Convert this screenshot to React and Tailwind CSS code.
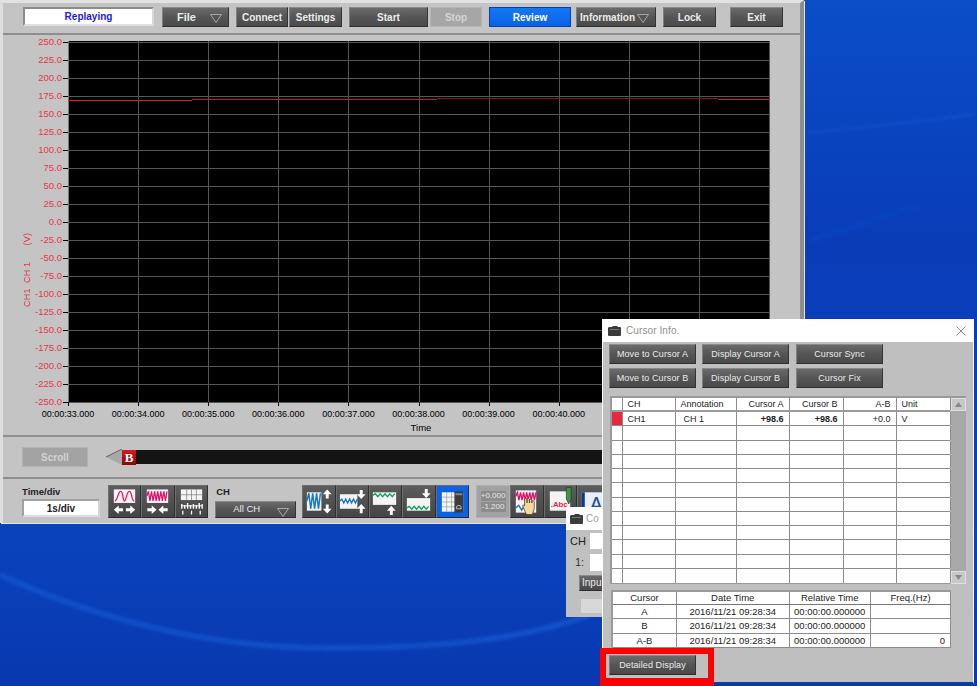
import React from "react";

const font = "font-['Liberation_Sans',Arial,sans-serif]";

const yTicks = [
  "250.0", "225.0", "200.0", "175.0", "150.0", "125.0", "100.0", "75.0", "50.0", "25.0", "0.0",
  "-25.0", "-50.0", "-75.0", "-100.0", "-125.0", "-150.0", "-175.0", "-200.0", "-225.0", "-250.0",
];
const times = ["33", "34", "35", "36", "37", "38", "39", "40", "41", "42", "43"];
// the last three labels sit under the Cursor Info window
const visibleTimes = times.slice(0, 8);

const bevel =
  "border border-t-[#8a8a8a] border-l-[#808080] border-r-[#333333] border-b-[#2e2e2e] bg-linear-to-b from-[#6b6b6b] via-[#555555] to-[#4a4a4a]";

// dark beveled button used all over the app
const Btn = ({ children, className = "", caret = false }) => (
  <div className={`flex items-center justify-center text-[#ececec] ${bevel} ${className}`}>
    <span>{children}</span>
    {caret && (
      <svg width="12" height="9" viewBox="0 0 12 9" className="absolute right-[6px] top-[6px]">
        <path d="M0.5 0.5H11.5L6 8.5Z" fill="none" stroke="#a8a8a8" />
      </svg>
    )}
  </div>
);

const Arrow = ({ x, y, dir }) => {
  const rot = { up: 0, right: 90, down: 180, left: 270 }[dir];
  return (
    <path
      transform={`translate(${x} ${y}) rotate(${rot})`}
      d="M0 -5L4.5 0H1.5V4.5H-1.5V0H-4.5Z"
      fill="#fff"
    />
  );
};

const Panel = ({ x, y, w, h }) => {
  const v = [];
  for (let i = x + 4; i < x + w; i += 4) v.push(i);
  const hz = [];
  for (let i = y + 4; i < y + h; i += 4) hz.push(i);
  return (
    <g>
      <rect x={x} y={y} width={w} height={h} fill="#f4f4f4" />
      {v.map((i) => (
        <line key={i} x1={i} x2={i} y1={y} y2={y + h} stroke="#b5b5b5" strokeWidth="0.5" />
      ))}
      {hz.map((i) => (
        <line key={i} x1={x} x2={x + w} y1={i} y2={i} stroke="#b5b5b5" strokeWidth="0.5" />
      ))}
    </g>
  );
};

const zig = (x, y, w, a, step) => {
  let d = `M${x} ${y}`;
  let up = true;
  for (let i = x + step; i <= x + w; i += step) {
    d += `L${i} ${up ? y - a : y + a}`;
    up = !up;
  }
  return d;
};

const IconBox = ({ children, blue = false }) => (
  <div
    className={`w-[33.4px] h-[33px] shrink-0 border border-t-[#6e6e6e] border-l-[#6e6e6e] border-r-[#2f2f2f] border-b-[#2a2a2a] ${
      blue ? "bg-[#0a62e6]" : "bg-linear-to-b from-[#5c5c5c] to-[#454545]"
    }`}
  >
    <svg width="31" height="31" viewBox="0 0 32 31" className="block">
      {children}
    </svg>
  </div>
);

const CursorBtn = ({ children, className = "w-[87px]" }) => (
  <Btn className={`h-[20px] pt-[1px] text-[9px] tracking-[0.1px] ${className}`}>{children}</Btn>
);

const TitleIcon = () => (
  <svg width="13" height="10" viewBox="0 0 13 10" className="shrink-0">
    <path d="M2 1H4L5 0H9L10 1H12Q13 1 13 2V9Q13 10 12 10H1Q0 10 0 9V2Q0 1 2 1Z" fill="#3b3b3b" />
    <rect x="2" y="3" width="9" height="1" fill="#777" />
  </svg>
);

const cols = "grid-cols-[10.5px_53px_61px_53px_54px_53px_54px]";
const cols2 = "grid-cols-[64px_112.5px_81.5px_80px]";

const Row = ({ cells, grid, head = false, last = false }) => (
  <div
    className={`grid ${grid} bg-white ${
      head ? "h-[12px] leading-[12px]" : "h-[14.25px] leading-[14px]"
    } ${head || last ? "" : "border-b border-[#8c8c8c]"}`}
  >
    {cells.map((c, i) => (
      <div key={i} className={`border-r border-[#8c8c8c] overflow-hidden whitespace-nowrap ${c.cn || ""}`}>
        {c.t}
      </div>
    ))}
  </div>
);

const emptyCells = Array.from({ length: 7 }, () => ({ t: "" }));

export default function App() {
  return (
    <div className={`relative w-[977px] h-[686px] overflow-hidden bg-[#0a3cb8] text-[10px] ${font}`}>
      {/* wallpaper */}
      <svg width="977" height="686" viewBox="0 0 977 686" className="absolute left-0 top-0">
        <defs>
          <linearGradient id="wall" x1="0" y1="0" x2="0" y2="1">
            <stop offset="0" stopColor="#0a4ec8" />
            <stop offset="0.35" stopColor="#0a3cb8" />
            <stop offset="0.8" stopColor="#0a42bc" />
            <stop offset="1" stopColor="#0838b0" />
          </linearGradient>
          <filter id="soft">
            <feGaussianBlur stdDeviation="2" />
          </filter>
        </defs>
        <rect width="977" height="686" fill="url(#wall)" />
        <g fill="none" filter="url(#soft)">
          <path d="M0 575C110 625 220 648 330 648S520 640 590 615" stroke="#1f62dc" strokeWidth="3" />
          <path d="M805 133C860 128 920 122 975 114" stroke="#1650cc" strokeWidth="2" />
          <path d="M810 240C850 230 880 215 920 205" stroke="#1650cc" strokeWidth="1.5" />
        </g>
      </svg>

      {/* main window */}
      <div className="relative w-[804px] h-[523px] flex flex-col bg-[#c4c4c4] border-r-4 border-r-[#8e8e8e] border-t-[3px] border-t-[#e2e2e2] border-l-[3px] border-l-[#dedede] shadow-[1px_1px_0_#e6e6e6]">
        {/* top bar */}
        <div className="h-[32px] flex items-start pt-[4px] pl-[20px] border-b-2 border-b-[#8f8f8f] font-bold text-[10px]">
          <div className="w-[131px] h-[19px] border-2 border-[#8c8c8c] border-b-[#e0e0e0] border-r-[#d8d8d8] bg-white text-[#1a1ae6] flex items-center justify-center">
            Replaying
          </div>
          <Btn className="relative w-[67px] h-[20px] ml-[8px] pr-[18px] text-[11px]" caret>
            File
          </Btn>
          <Btn className="w-[52px] h-[20px] ml-[7px]">Connect</Btn>
          <Btn className="w-[53px] h-[20px] ml-[1px]">Settings</Btn>
          <Btn className="w-[79px] h-[20px] ml-[7px]">Start</Btn>
          <div className="w-[52px] h-[20px] ml-[2px] bg-[#a6a6a6] border border-[#b4b4b4] text-[#d4d4d4] flex items-center justify-center">
            Stop
          </div>
          <div className="w-[82px] h-[20px] ml-[7px] border border-[#0a3fa8] bg-linear-to-b from-[#1478f5] to-[#0a62e6] text-white flex items-center justify-center">
            Review
          </div>
          <Btn className="relative w-[80px] h-[20px] ml-[5px] pr-[17px]" caret>
            Information
          </Btn>
          <Btn className="w-[53px] h-[20px] ml-[7px]">Lock</Btn>
          <Btn className="w-[53px] h-[20px] ml-[14px]">Exit</Btn>
        </div>

        {/* chart */}
        <div className="h-[402px] flex border-b-2 border-b-[#8f8f8f] pl-[9px] bg-[#c4c4c4]">
          <div className="w-[10px] ml-[9px] pt-[200px] text-[#e8344c] text-[9px]">
            <div className="[writing-mode:vertical-rl] rotate-180 h-[72px] whitespace-pre tracking-[0.2px]">
              {"CH1  CH 1      (V)"}
            </div>
          </div>
          <div className="w-[37px] -mt-[1.7px]">
            {yTicks.map((t) => (
              <div key={t} className="h-[18px] flex items-center justify-end text-[#e8344c] text-[9.5px]">
                <span className="mr-[1px]">{t}</span>
                <span className="w-[5px] h-[1px] bg-black" />
              </div>
            ))}
          </div>
          <div className="w-[702px] pt-[6px]">
            <svg width="702" height="366" viewBox="0 0 702 366" className="block">
              <rect width="702" height="361" fill="#000" />
              {yTicks.map((t, i) => (
                <line key={t} x1="0" x2="702" y1={1.5 + 18 * i} y2={1.5 + 18 * i} stroke="#565656" />
              ))}
              {times.map((t, i) => {
                const x = Math.round(70.1 * i) + 0.5;
                return (
                  <g key={t}>
                    <line x1={x} x2={x} y1="0" y2="361" stroke={i === 0 ? "#777" : "#555"} />
                    <line x1={x} x2={x} y1="361" y2="365" stroke="#000" />
                  </g>
                );
              })}
              <rect x="0" y="59" width="124" height="1" fill="#e8182c" />
              <rect x="124" y="58" width="245" height="1" fill="#c01c28" />
              <rect x="369" y="57" width="281" height="1" fill="#8c1018" />
              <rect x="650" y="58" width="52" height="1" fill="#c02430" />
            </svg>
            <div className="flex -ml-[35px] text-black text-[9px] leading-[11px] pt-[2px]">
              {visibleTimes.map((t) => (
                <div key={t} className="w-[70.1px] shrink-0 text-center">
                  00:00:{t}.000
                </div>
              ))}
            </div>
            <div className="text-center text-[9.5px] leading-[12px] pt-[2px] pl-[4px] text-black">Time</div>
          </div>
        </div>

        {/* scroll bar row */}
        <div className="h-[42px] flex items-center border-b-2 border-b-[#8f8f8f] pl-[19px]">
          <div className="w-[66px] h-[20px] bg-[#a3a3a3] border border-[#b2b2b2] text-[#d2d2d2] font-bold flex items-center justify-center">
            Scroll
          </div>
          <svg width="16" height="16" viewBox="0 0 16 16" className="ml-[18px]">
            <path d="M16 0L0 8L16 16Z" fill="#a8a8a8" />
            <path d="M16 0L0 8" stroke="#666" fill="none" />
          </svg>
          <div className="w-[14px] h-[15px] bg-linear-to-b from-[#d81818] to-[#8a0808] text-white font-bold text-[13px] leading-[15px] text-center font-['Liberation_Serif',serif]">
            B
          </div>
          <div className="w-[500px] h-[14px] bg-[#141414]" />
        </div>

        {/* bottom tools */}
        <div className="flex-1 flex items-start pl-[19px] pt-[6px]">
          <div className="w-[78px] mr-[8px]">
            <div className="font-bold text-[9.5px] text-[#222] leading-[13px]">Time/div</div>
            <div className="h-[18px] mt-[1px] border-2 border-[#a0a0a0] border-b-[#dcdcdc] border-r-[#d4d4d4] bg-white font-bold text-[#222] flex items-center justify-center">
              1s/div
            </div>
          </div>
          <div className="flex">
            <IconBox>
              <Panel x="5" y="3" w="22" h="14" />
              <path d="M6 15C9 15 9 5 12 5S14 15 16 15 18 5 21 5 23 15 26 15" fill="none" stroke="#e0106a" strokeWidth="1.3" />
              <Arrow x="10" y="24" dir="left" />
              <Arrow x="22" y="24" dir="right" />
            </IconBox>
            <IconBox>
              <Panel x="5" y="3" w="22" h="14" />
              <path d={zig(5, 10, 22, 5, 1.6)} fill="none" stroke="#e0106a" strokeWidth="1.3" />
              <Arrow x="10" y="24" dir="right" />
              <Arrow x="22" y="24" dir="left" />
            </IconBox>
            <IconBox>
              <rect x="5" y="3" width="22" height="11" fill="#f4f4f4" />
              <path d="M5 8.5H27M11 3V14M16 3V14M21 3V14" stroke="#777" strokeWidth="0.7" />
              <path d="M6 23V18M9 23V19M12 23V17M15 23V19M18 23V18M21 23V19M24 23V17M27 23V18" stroke="#fff" strokeWidth="1.4" />
              <path d="M5 20H27" stroke="#fff" />
              <path d="M7 25V29M16 25V29M25 25V29" stroke="#fff" strokeWidth="1.3" />
            </IconBox>
          </div>
          <div className="w-[81px] ml-[7px] mr-[6px]">
            <div className="font-bold text-[9.5px] text-[#222] leading-[13px] ml-[1px]">CH</div>
            <Btn className="relative h-[17px] mt-[3px] pr-[18px] text-[9.5px] font-normal" caret>
              All CH
            </Btn>
          </div>
          <div className="flex">
            <IconBox>
              <rect x="4" y="6" width="15" height="19" fill="#f0f0f0" />
              <path d={zig(4, 15, 15, 8, 2)} fill="none" stroke="#1878c8" strokeWidth="1.5" />
              <Arrow x="25" y="8" dir="up" />
              <Arrow x="25" y="23" dir="down" />
            </IconBox>
            <IconBox>
              <Panel x="3" y="8" w="18" h="15" />
              <path d={zig(3, 15, 18, 2, 2)} fill="none" stroke="#1878c8" strokeWidth="1.4" />
              <Arrow x="25" y="8" dir="down" />
              <Arrow x="25" y="23" dir="up" />
            </IconBox>
            <IconBox>
              <Panel x="3" y="6" w="24" h="13" />
              <path d={zig(3, 9, 24, 1.5, 2.5)} fill="none" stroke="#10a060" strokeWidth="1.4" />
              <Arrow x="22" y="25" dir="up" />
            </IconBox>
            <IconBox>
              <Panel x="4" y="12" w="24" h="13" />
              <path d={zig(4, 22, 24, 1.5, 2.5)} fill="none" stroke="#10a060" strokeWidth="1.4" />
              <Arrow x="24" y="7" dir="down" />
            </IconBox>
            <IconBox blue>
              <rect x="5" y="6" width="22" height="20" fill="#f4f4f4" />
              <path d="M5 11H19M5 16H19M5 21H19M10 6V26M15 6V26" stroke="#999" strokeWidth="0.7" />
              <rect x="18" y="5" width="9" height="22" fill="#3c3c3c" />
              <rect x="19" y="7" width="7" height="2" fill="#888" />
              <path d="M20 22A2.5 2.5 0 0 1 25 22V23H20Z" fill="none" stroke="#ddd" strokeWidth="0.8" />
            </IconBox>
          </div>
          <div className="flex ml-[7px]">
            <div className="w-[34px] h-[33px] bg-[#a2a2a2] border border-[#b0b0b0] flex flex-col items-center justify-center gap-[1px] text-[8px] leading-[10px] text-[#e8e8e8]">
              <div className="w-[25px] bg-[#8c8c8c] text-center">+0.000</div>
              <div className="w-[25px] bg-[#8c8c8c] text-center">-1.200</div>
            </div>
            <IconBox>
              <Panel x="5" y="4" w="21" h="23" />
              <path d={zig(5, 10, 21, 4, 1.6)} fill="none" stroke="#e0106a" strokeWidth="1.4" />
              <path d={zig(5, 22, 12, 2.5, 3)} fill="none" stroke="#1878c8" strokeWidth="1.4" />
              <path d="M15 27L12 20Q12 18 14 20V13Q15.5 11.5 16.5 13V17 12.5Q18 11.5 19 13V17 13.5Q20.5 12.5 21.5 14V17 15Q23 14 24 15.5V23L22 29H16Z" fill="#f8d79c" stroke="#3a3020" strokeWidth="0.7" />
            </IconBox>
            <IconBox>
              <Panel x="5" y="5" w="21" h="20" />
              <text x="6" y="21" fontSize="8" fontWeight="bold" fill="#e81840" fontFamily="Liberation Sans">.Abc</text>
              <path d="M22 1H27V13L24.5 18L22 13Z" fill="#3a9a3a" stroke="#223" strokeWidth="0.6" />
            </IconBox>
            <IconBox>
              <rect x="4" y="6" width="26" height="22" fill="#e8eef8" />
              <rect x="4" y="6" width="3" height="22" fill="#0a3a90" />
              <text x="12" y="25" fontSize="20" fill="#1a4a9a" fontFamily="Liberation Sans">A</text>
            </IconBox>
          </div>
        </div>
      </div>

      {/* small dialog behind cursor info */}
      <div className="absolute left-[566px] top-[507px] w-[40px] h-[110px] bg-[#c0c0c0] flex flex-col">
        <div className="h-[23px] bg-white flex items-center pl-[4px] gap-[3px] text-[#a0a0a0] text-[10px]">
          <TitleIcon />
          <span>Co</span>
        </div>
        <div className="flex items-center mt-[3px]">
          <span className="w-[24px] text-center text-[11px] text-[#222]">CH</span>
          <div className="flex-1 h-[16px] bg-white" />
        </div>
        <div className="flex items-center mt-[4px]">
          <span className="w-[24px] pl-[9px] text-[11px] text-[#333]">1:</span>
          <div className="flex-1 h-[17px] bg-white" />
        </div>
        <Btn className="h-[16px] ml-[13px] mt-[4px] pl-[2px] !justify-start overflow-hidden">Inpu</Btn>
        <div className="h-[14px] ml-[15px] mt-[8px] bg-[#d8d8d8]" />
      </div>

      {/* cursor info */}
      <div className="absolute left-[602px] top-[319px] w-[372px] h-[365px] bg-[#bfbfbf] border-l border-r border-white border-b-2 border-b-[#0a3cab] flex flex-col">
        <div className="h-[23px] shrink-0 bg-white flex items-center pl-[5px] pr-[7px] gap-[5px] text-[#8f8f8f] text-[10px] tracking-[0.1px]">
          <TitleIcon />
          <span>Cursor Info.</span>
          <svg width="10" height="10" viewBox="0 0 10 10" className="ml-auto">
            <path d="M0.5 0.5L9.5 9.5M9.5 0.5L0.5 9.5" stroke="#888" fill="none" />
          </svg>
        </div>
        <div className="flex flex-col gap-[4px] pl-[6px] pt-[2px] shrink-0">
          <div className="flex">
            <CursorBtn>Move to Cursor A</CursorBtn>
            <CursorBtn className="w-[87px] ml-[6px]">Display Cursor A</CursorBtn>
            <CursorBtn className="w-[87px] ml-[7px]">Cursor Sync</CursorBtn>
          </div>
          <div className="flex">
            <CursorBtn>Move to Cursor B</CursorBtn>
            <CursorBtn className="w-[87px] ml-[6px]">Display Cursor B</CursorBtn>
            <CursorBtn className="w-[87px] ml-[7px]">Cursor Fix</CursorBtn>
          </div>
        </div>

        <div className="ml-[7px] mt-[8px] w-[356px] flex border-t-2 border-l-2 border-t-[#9a9a9a] border-l-[#9a9a9a] shrink-0 text-[9px] text-[#222]">
          <div className="w-[338px] bg-[#9a9a9a] pb-[1px]">
            <div className="mb-[2px]">
              <Row
                grid={cols}
                head
                cells={[
                  { t: "" },
                  { t: "CH", cn: "pl-[5px]" },
                  { t: "Annotation", cn: "pl-[5px]" },
                  { t: "Cursor A", cn: "text-right pr-[5px]" },
                  { t: "Cursor B", cn: "text-right pr-[5px]" },
                  { t: "A-B", cn: "text-right pr-[5px]" },
                  { t: "Unit", cn: "pl-[5px]" },
                ]}
              />
            </div>
            <Row
              grid={cols}
              cells={[
                { t: "", cn: "bg-[#e8283c]" },
                { t: "CH1", cn: "pl-[5px]" },
                { t: "CH 1", cn: "pl-[8px]" },
                { t: "+98.6", cn: "text-right pr-[5px] font-bold" },
                { t: "+98.6", cn: "text-right pr-[5px] font-bold" },
                { t: "+0.0", cn: "text-right pr-[5px]" },
                { t: "V", cn: "pl-[5px]" },
              ]}
            />
            {Array.from({ length: 11 }, (_, i) => (
              <Row key={i} grid={cols} cells={emptyCells} last={i === 10} />
            ))}
          </div>
          <div className="w-[15px] ml-[1px] bg-[#a8a8a8] flex flex-col justify-between">
            <div className="h-[13px] bg-[#c8c8c8] border border-[#e0e0e0] flex items-center justify-center">
              <svg width="7" height="5" viewBox="0 0 7 5">
                <path d="M3.5 0L7 5H0Z" fill="#888" />
              </svg>
            </div>
            <div className="h-[13px] bg-[#c8c8c8] border border-[#e0e0e0] flex items-center justify-center">
              <svg width="7" height="5" viewBox="0 0 7 5">
                <path d="M3.5 5L7 0H0Z" fill="#888" />
              </svg>
            </div>
          </div>
        </div>

        <div className="ml-[8px] mt-[6px] w-[340px] border-t-2 border-l-2 border-t-[#9a9a9a] border-l-[#9a9a9a] bg-[#777] shrink-0 text-[9.5px] text-[#222] text-center">
          <div className="mb-[1px]">
            <Row
              grid={cols2}
              head
              cells={[{ t: "Cursor" }, { t: "Date Time" }, { t: "Relative Time" }, { t: "Freq.(Hz)" }]}
            />
          </div>
          <Row grid={cols2} cells={[{ t: "A" }, { t: "2016/11/21 09:28:34" }, { t: "00:00:00.000000" }, { t: "" }]} />
          <Row grid={cols2} cells={[{ t: "B" }, { t: "2016/11/21 09:28:34" }, { t: "00:00:00.000000" }, { t: "" }]} />
          <Row
            grid={cols2}
            cells={[
              { t: "A-B" },
              { t: "2016/11/21 09:28:34" },
              { t: "00:00:00.000000" },
              { t: "0", cn: "text-right pr-[5px]" },
            ]}
          />
        </div>

        <div className="ml-[6px] mt-[7px] shrink-0">
          <CursorBtn>Detailed Display</CursorBtn>
        </div>
      </div>

      {/* red callout */}
      <div className="absolute left-[600px] top-[648px] w-[114px] h-[38px] border-[6px] border-b-[8px] border-[#ff0000]" />
    </div>
  );
}
